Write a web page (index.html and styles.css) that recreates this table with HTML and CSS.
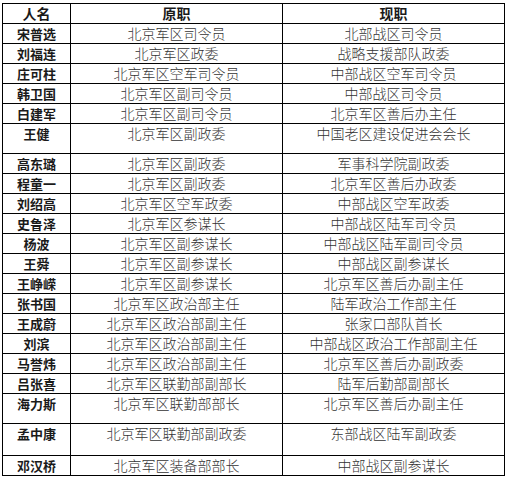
FILE: index.html
```html
<!DOCTYPE html>
<html lang="zh">
<head>
<meta charset="utf-8">
<link rel="stylesheet" href="styles.css">
</head>
<body>
<table class="roster">
  <colgroup>
    <col class="c-name">
    <col class="c-old">
    <col class="c-new">
  </colgroup>
  <thead>
    <tr><th>人名</th><th>原职</th><th>现职</th></tr>
  </thead>
  <tbody>
    <tr><td class="name">宋普选</td><td>北京军区司令员</td><td>北部战区司令员</td></tr>
    <tr><td class="name">刘福连</td><td>北京军区政委</td><td>战略支援部队政委</td></tr>
    <tr><td class="name">庄可柱</td><td>北京军区空军司令员</td><td>中部战区空军司令员</td></tr>
    <tr><td class="name">韩卫国</td><td>北京军区副司令员</td><td>中部战区司令员</td></tr>
    <tr><td class="name">白建军</td><td>北京军区副司令员</td><td>北京军区善后办主任</td></tr>
    <tr class="tall"><td class="name">王健</td><td>北京军区副政委</td><td>中国老区建设促进会会长</td></tr>
    <tr><td class="name">高东璐</td><td>北京军区副政委</td><td>军事科学院副政委</td></tr>
    <tr><td class="name">程童一</td><td>北京军区副政委</td><td>北京军区善后办政委</td></tr>
    <tr><td class="name">刘绍高</td><td>北京军区空军政委</td><td>中部战区空军政委</td></tr>
    <tr><td class="name">史鲁泽</td><td>北京军区参谋长</td><td>中部战区陆军司令员</td></tr>
    <tr><td class="name">杨波</td><td>北京军区副参谋长</td><td>中部战区陆军副司令员</td></tr>
    <tr><td class="name">王舜</td><td>北京军区副参谋长</td><td>中部战区副参谋长</td></tr>
    <tr><td class="name">王峥嵘</td><td>北京军区副参谋长</td><td>北京军区善后办副主任</td></tr>
    <tr><td class="name">张书国</td><td>北京军区政治部主任</td><td>陆军政治工作部主任</td></tr>
    <tr><td class="name">王成蔚</td><td>北京军区政治部副主任</td><td>张家口部队首长</td></tr>
    <tr><td class="name">刘滨</td><td>北京军区政治部副主任</td><td>中部战区政治工作部副主任</td></tr>
    <tr><td class="name">马誉炜</td><td>北京军区政治部副主任</td><td>北京军区善后办副政委</td></tr>
    <tr><td class="name">吕张喜</td><td>北京军区联勤部副部长</td><td>陆军后勤部副部长</td></tr>
    <tr class="tall"><td class="name">海力斯</td><td>北京军区联勤部部长</td><td>北京军区善后办副主任</td></tr>
    <tr class="taller"><td class="name">孟中康</td><td>北京军区联勤部副政委</td><td>东部战区陆军副政委</td></tr>
    <tr><td class="name">邓汉桥</td><td>北京军区装备部部长</td><td>中部战区副参谋长</td></tr>
  </tbody>
</table>
</body>
</html>
```
FILE: styles.css
```css
html, body {
  margin: 0;
  padding: 0;
  background: #ffffff;
}
body {
  padding: 3px 0 0 2px;
  font-family: "Noto Sans CJK SC", "Noto Sans", sans-serif;
  color: #333333;
}
.roster {
  border-collapse: collapse;
  table-layout: fixed;
  width: 502px;
}
.c-name { width: 68px; }
.c-old { width: 212px; }
.c-new { width: 222px; }
.roster th,
.roster td {
  border: 1px solid #000;
  padding: 0;
  height: 19px;
  line-height: 19px;
  font-size: 14px;
  font-weight: 300;
  text-align: center;
  vertical-align: top;
  white-space: nowrap;
  overflow: hidden;
}
.roster th {
  font-weight: bold;
  color: #1a1a1a;
}
.roster td.name {
  font-weight: bold;
  font-size: 13px;
  color: #1a1a1a;
}
.roster tr.tall td { height: 29px; }
.roster tr.taller td { height: 31px; }
```
